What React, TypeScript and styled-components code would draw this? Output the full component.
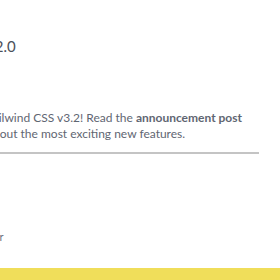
import React from "react";
import styled, { createGlobalStyle } from "styled-components";

const GlobalStyle = createGlobalStyle`
  html, body {
    margin: 0;
    padding: 0;
    background: #ffffff;
    overflow: hidden;
  }
  body {
    font-family: "Lato", "Liberation Sans", sans-serif;
    -webkit-font-smoothing: antialiased;
  }
`;

const Page = styled.div`
  width: 280px;
  height: 280px;
  display: flex;
  flex-direction: column;
  overflow: hidden;
`;

// the page is scrolled sideways: its left padding and first letters lie off screen
const Content = styled.main`
  flex: 1;
  margin-left: -13px;
  width: 272px;
  display: flex;
  flex-direction: column;
`;

const Version = styled.h2`
  margin: 36px 0 0;
  font-size: 15px;
  font-weight: 400;
  line-height: 20px;
  color: #4b505a;
`;

const Notice = styled.section`
  margin-top: 54px;
  padding-bottom: 10px;
  border-bottom: 2px solid #c4c4c4;
`;

const Text = styled.p`
  margin: 0;
  font-size: 12px;
  line-height: 16px;
  color: #5f6672;
  white-space: nowrap;
`;

const Link = styled.a`
  font-weight: 700;
  color: #5f6672;
  text-decoration: none;
`;

const Footnote = styled.p`
  margin: 76px 0 0;
  font-size: 11px;
  line-height: 14px;
  color: #6b7280;
`;

const Banner = styled.footer`
  height: 12px;
  background: #f0de5a;
`;

const App = () => {
  return (
    <>
      <GlobalStyle />
      <Page>
        <Content>
          <Version>v2.0</Version>
          <Notice>
            <Text>
              Tailwind CSS v3.2! Read the <Link href="#">announcement post</Link>
              <br />
              about the most exciting new features.
            </Text>
          </Notice>
          <Footnote>Ver</Footnote>
        </Content>
        <Banner />
      </Page>
    </>
  );
};

export default App;
